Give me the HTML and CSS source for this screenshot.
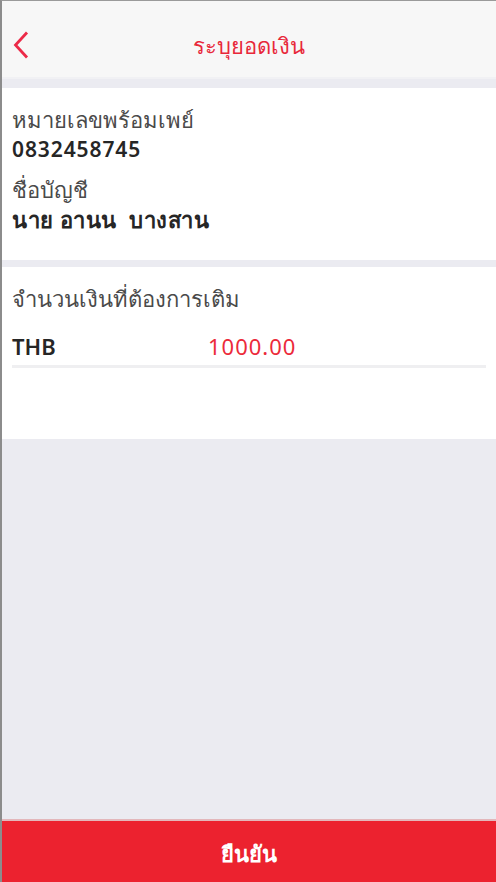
FILE: index.html
```html
<!DOCTYPE html>
<html lang="th">
<head>
<meta charset="utf-8">
<title>ระบุยอดเงิน</title>
<link rel="stylesheet" href="styles.css">
</head>
<body>
<div class="screen">
  <header class="topbar">
    <span class="back">
      <svg width="18" height="28" viewBox="0 0 18 28"><path d="M15 1.5 L3.5 14 L15 26.5" fill="none" stroke="#ec2a48" stroke-width="2.8"/></svg>
    </span>
    <h1 class="title">ระบุยอดเงิน</h1>
  </header>
  <section class="card info">
    <div class="label">หมายเลขพร้อมเพย์</div>
    <div class="value">0832458745</div>
    <div class="label second">ชื่อบัญชี</div>
    <div class="value name">นาย อานน &nbsp;บางสาน</div>
  </section>
  <section class="card amount">
    <div class="label">จำนวนเงินที่ต้องการเติม</div>
    <div class="amount-row">
      <span class="cur">THB</span>
      <span class="num">1000.00</span>
    </div>
  </section>
  <div class="filler"></div>
  <div class="confirm">ยืนยัน</div>
</div>
</body>
</html>
```
FILE: styles.css
```css
html, body { margin: 0; padding: 0; }
body {
  font-family: "Noto Sans", "Liberation Sans", sans-serif;
  background: #ebebf1;
}
.screen {
  width: 494px;
  height: 881px;
  border-left: 2px solid #8c8c8c;
  border-top: 1px solid #9a9a9a;
  display: flex;
  flex-direction: column;
  background: #ebebf1;
}
.topbar {
  height: 76px;
  background: #f7f7f7;
  position: relative;
  border-bottom: 2px solid #f1f1f4;
  box-sizing: content-box;
}
.back {
  position: absolute;
  left: 10px;
  top: 30px;
  line-height: 0;
}
.title {
  margin: 0;
  padding-top: 29px;
  text-align: center;
  color: #e8283a;
  font-size: 22px;
  line-height: 30px;
  font-weight: normal;
}
.card {
  background: #fff;
  padding: 0 10px;
  height: 172px;
  box-sizing: border-box;
}
.info {
  margin-top: 9px;
  padding-top: 16px;
}
.label {
  color: #4a4a4a;
  font-size: 22px;
  line-height: 30px;
  font-weight: 300;
}
.label.second { margin-top: 10px; }
.value {
  color: #262626;
  font-size: 21px;
  line-height: 30px;
  font-weight: 600;
  letter-spacing: 0.9px;
}
.value.name { font-size: 22px; letter-spacing: 0.5px; }
.amount {
  margin-top: 7px;
  padding-top: 16px;
}
.amount-row {
  display: flex;
  align-items: baseline;
  line-height: 30px;
  margin-top: 18px;
  padding-bottom: 4px;
  border-bottom: 3px solid #efeff1;
}
.cur {
  width: 196px;
  font-size: 22px;
  font-weight: 600;
  color: #262626;
}
.num {
  font-size: 22px;
  letter-spacing: 1px;
  color: #ec2a3a;
}
.filler { flex: 1; }
.confirm {
  height: 63px;
  box-sizing: border-box;
  border-top: 2px solid #e3b7bb;
  background: #ec222f;
  color: #fff;
  font-size: 22px;
  line-height: 30px;
  font-weight: 600;
  text-align: center;
  padding-top: 17px;
}
```
